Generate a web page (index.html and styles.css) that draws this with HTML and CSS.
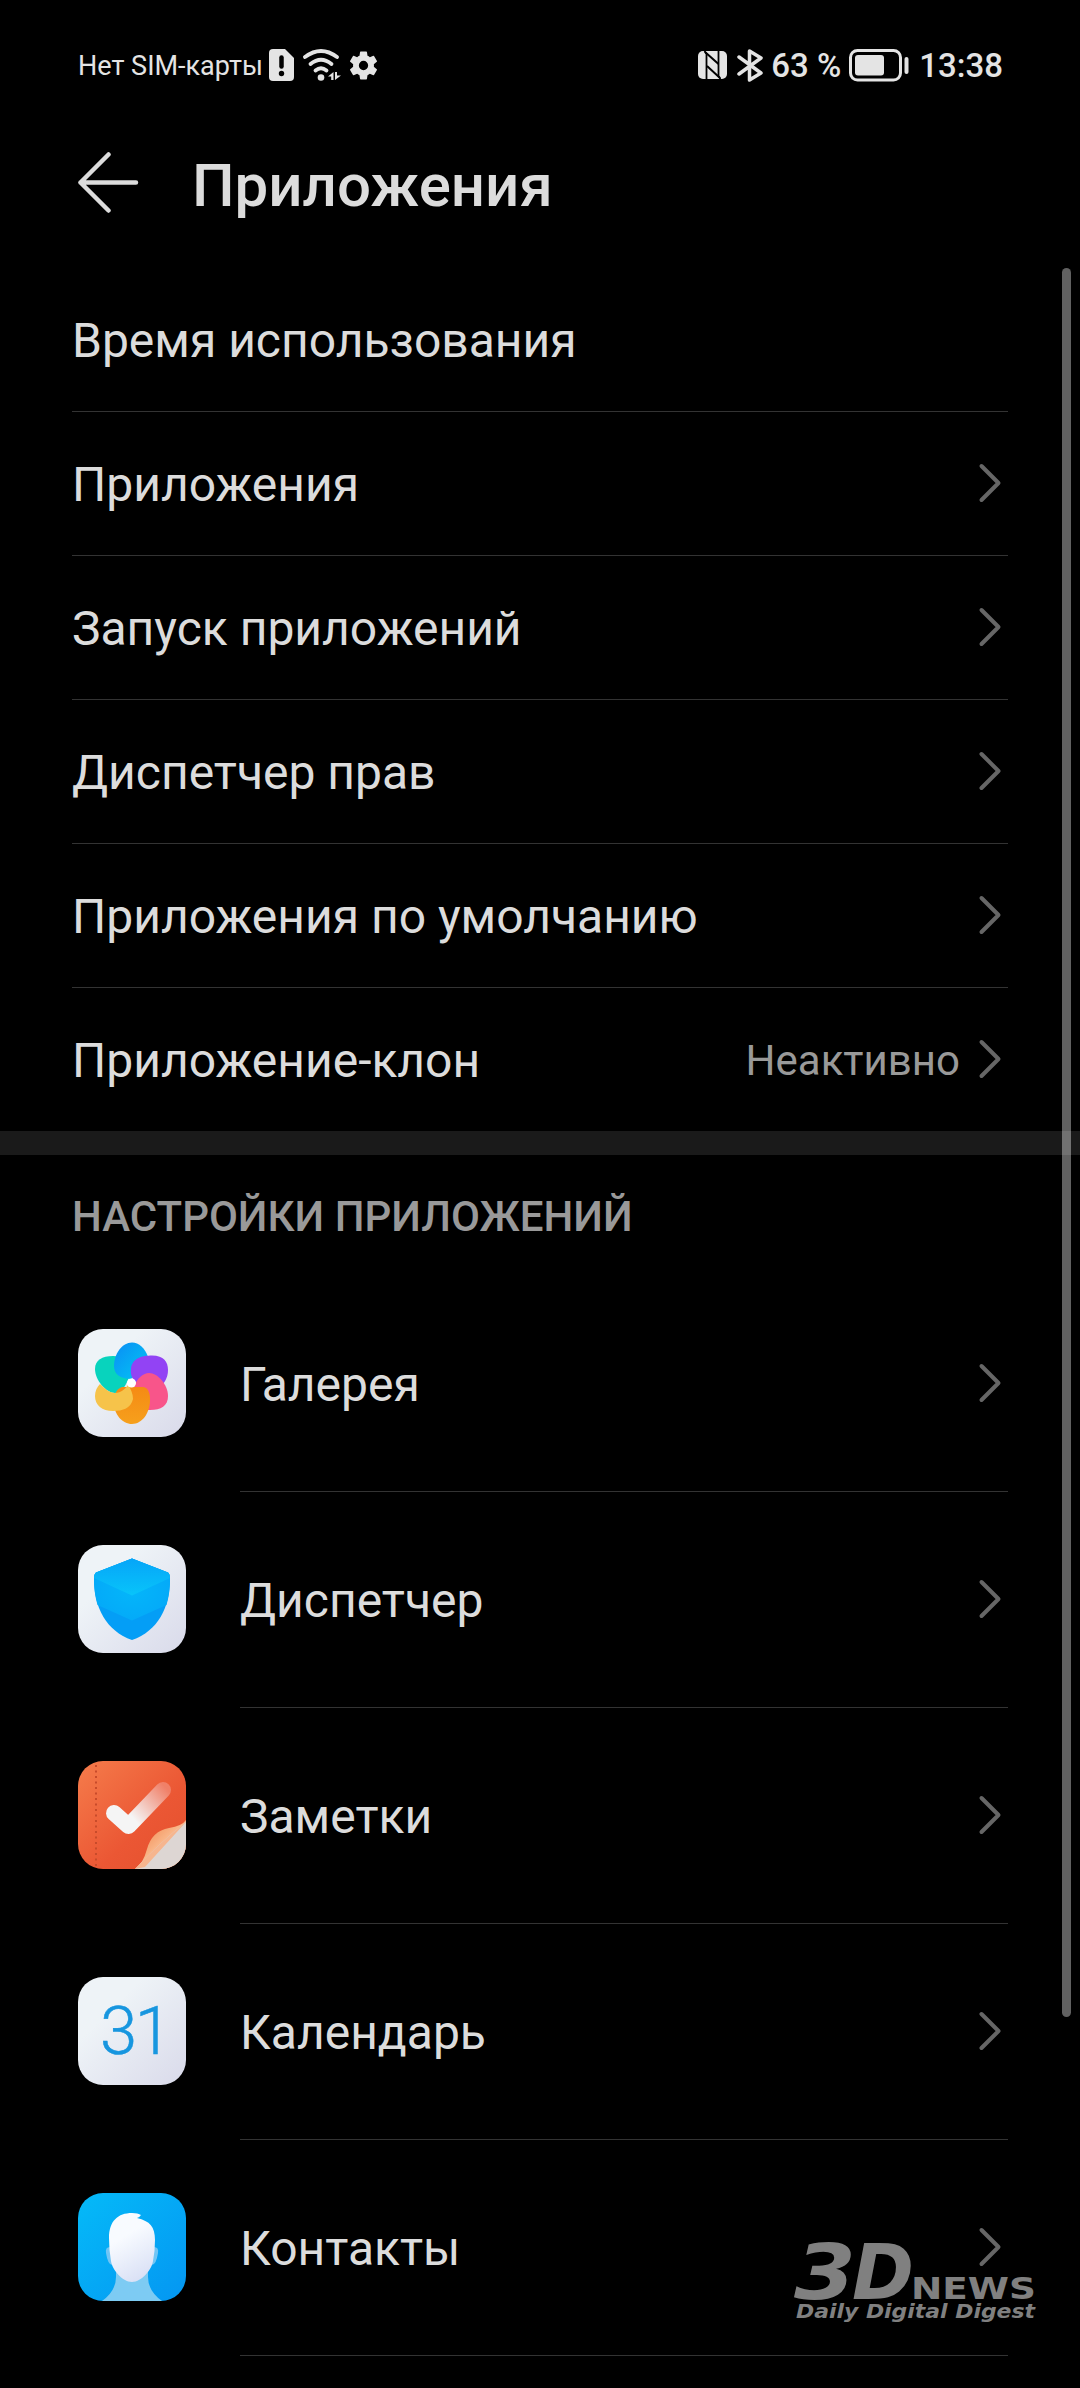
FILE: index.html
```html
<!DOCTYPE html>
<html lang="ru">
<head>
<meta charset="utf-8">
<title>Приложения</title>
<link rel="stylesheet" href="styles.css">
</head>
<body>
<svg width="0" height="0" class="defs" aria-hidden="true">
  <defs>
    <linearGradient id="paper" x1="0" y1="0" x2="1" y2="1"><stop offset=".3" stop-color="#eef3f7"/><stop offset="1" stop-color="#d9daea"/></linearGradient>
    <symbol id="chevron" viewBox="0 0 24 40"><path d="M3.500 3 L20.500 20 L3.500 37" fill="none" stroke="#666" stroke-width="4" stroke-linecap="round" stroke-linejoin="round"/></symbol>
  </defs>
</svg>
<div class="screen">
  <header class="status">
    <div class="status-left">
      <span class="carrier">Нет SIM-карты</span>
      <svg class="sim" width="25" height="32" viewBox="0 0 25 32"><path fill="#e4e4e4" d="M4 0h12l9 9v19a4 4 0 0 1-4 4H4a4 4 0 0 1-4-4V4a4 4 0 0 1 4-4z"/><path d="M12.500 8.500v9" stroke="#000" stroke-width="4.500" stroke-linecap="round"/><circle cx="12.500" cy="24.500" r="2.700"/></svg>
      <svg class="wifi" width="38" height="32" viewBox="0 0 38 32"><g fill="none" stroke="#e4e4e4" stroke-width="3.800" stroke-linecap="round"><path d="M2 8Q18 -4 34 8"/><path d="M7.500 15Q18 6.500 28.500 15"/><path d="M12.500 21.500Q18 17 23.500 21.500"/></g><circle cx="18" cy="28.500" r="3.300" fill="#e4e4e4"/><path fill="#e4e4e4" d="M30.500 23v8h-2.300v-3.500H25zM32 31v-8h2v3.500h4z"/></svg>
      <svg class="gear" width="29" height="29" viewBox="2 2 20 20"><path fill="#e4e4e4" d="M19.140 12.940c.040-.3.060-.61.060-.94s-.020-.64-.070-.94l2.030-1.580a.49.49 0 0 0 .12-.61l-1.920-3.320a.49.49 0 0 0-.59-.22l-2.390.96a7 7 0 0 0-1.620-.94L14.400 2.810a.48.48 0 0 0-.48-.41h-3.840a.47.47 0 0 0-.47.41l-.36 2.540c-.59.240-1.130.57-1.620.94l-2.390-.96a.47.47 0 0 0-.59.220L2.740 8.870a.47.470 0 0 0 .12.610l2.030 1.580c-.050.300-.090.630-.090.940s.020.640.070.940l-2.030 1.580a.49.490 0 0 0-.12.610l1.920 3.320c.12.220.370.290.590.220l2.390-.96c.500.380 1.030.700 1.620.940l.36 2.540c.050.240.240.410.480.410h3.840c.240 0 .440-.170.470-.410l.36-2.540a7 7 0 0 0 1.620-.94l2.390.96c.220.080.470 0 .590-.22l1.920-3.320a.47.470 0 0 0-.12-.61zM12 15.200a3.200 3.200 0 1 1 0-6.400 3.200 3.200 0 0 1 0 6.400z"/></svg>
    </div>
    <div class="status-right">
      <svg class="nfc" width="29" height="28" viewBox="0 0 29 28"><rect width="29" height="28" rx="5" fill="#e4e4e4"/><path d="M6.500 0L8.500 3V28M22.500 28L20.500 25V0" fill="none" stroke="#000" stroke-width="1.800"/><path d="M7 1L20.500 13M9 15L22 27" fill="none" stroke="#000" stroke-width="2"/></svg>
      <svg class="bt" width="26" height="33" viewBox="0 0 26 33"><path d="M2 8L24 24L12.500 31V2L24 9L2 25" fill="none" stroke="#e4e4e4" stroke-width="3.500" stroke-linejoin="round" stroke-linecap="round"/></svg>
      <span class="clock percent">63 %</span>
      <svg class="battery" width="60" height="33" viewBox="0 0 60 33"><rect x="1.500" y="1.500" width="50" height="29.500" rx="7" fill="none" stroke="#e4e4e4" stroke-width="3"/><rect x="6" y="6" width="29" height="20.500" rx="3" fill="#e4e4e4"/><rect x="55.500" y="8" width="4" height="17" rx="2" fill="#e4e4e4"/></svg>
      <span class="clock">13:38</span>
    </div>
  </header>

  <div class="titlebar">
    <svg width="62" height="62" viewBox="0 0 62 62"><path d="M30.500 2.500L2.500 30.500L30.500 58.500M2.500 30.500H58" fill="none" stroke="#dcdcdc" stroke-width="4.500" stroke-linecap="round" stroke-linejoin="round"/></svg>
    <h1>Приложения</h1>
  </div>

  <main>
    <div class="row"><span>Время использования</span></div>
    <div class="row"><span>Приложения</span><svg class="chev"><use href="#chevron"/></svg></div>
    <div class="row"><span>Запуск приложений</span><svg class="chev"><use href="#chevron"/></svg></div>
    <div class="row"><span>Диспетчер прав</span><svg class="chev"><use href="#chevron"/></svg></div>
    <div class="row"><span>Приложения по умолчанию</span><svg class="chev"><use href="#chevron"/></svg></div>
    <div class="row last"><span>Приложение-клон</span><span class="value">Неактивно</span><svg class="chev"><use href="#chevron"/></svg></div>
    <div class="band"></div>
    <h2>НАСТРОЙКИ ПРИЛОЖЕНИЙ</h2>

    <div class="app">
      <svg class="icon" viewBox="0 0 108 108">
        <defs>
          <linearGradient id="petal-blue" x1="0" y1="0" x2="1" y2="1"><stop stop-color="#0a8df5"/><stop offset=".7" stop-color="#05b6f4"/></linearGradient>
          <linearGradient id="petal-orange" x1="0" y1="0" x2="0" y2="1"><stop stop-color="#f58a14"/><stop offset="1" stop-color="#f6a01c"/></linearGradient>
        </defs>
        <rect width="108" height="108" rx="25" fill="url(#paper)"/>
        <path d="M17 40C17 31 24 27 35 27C47 27 52 34 52 42C51 53 44 64 37 64C28 64 17 51 17 40Z" fill="#08d3bd"/>
        <path d="M53 50C42 50 36 45 36 37C36 25 44 13.500 54 13.500C61 13.500 67 19 70 28L66 40Z" fill="url(#petal-blue)"/>
        <path d="M53 40C54 29 64 26.500 74 26.500C86 26.500 90 33 90 41C90 49 86 55 80 60C72 62 60 58 55 50C53 47 52.500 43 53 40Z" fill="#9243f4"/>
        <path d="M56 57C60 49 65 44 71 44C80 44 90 56 90 67C90 77 83 81 72 81C60 81 54 72 56 57Z" fill="#f8558a"/>
        <path d="M44 58H65C71 59 72 65 72 71C72 84 64 95 54 95C44 95 36 85 36 74C36 66 38 60 44 58Z" fill="url(#petal-orange)"/>
        <path d="M22 55C27 60 32 64 37 64C43 64 47 60 50 56C53 60 55 65 55 70C53 79 45 82 35 82C24 82 17 76 17 67C17 62 19 58 22 55Z" fill="#f6c34a"/>
        <circle cx="53.500" cy="54" r="4.500" fill="#fff"/>
      </svg>
      <div class="app-body"><span>Галерея</span><svg class="chev"><use href="#chevron"/></svg></div>
    </div>

    <div class="app">
      <svg class="icon" viewBox="0 0 108 108">
        <defs>
          <linearGradient id="shield" x1="0" y1="0" x2="0" y2="1"><stop stop-color="#06a5f8"/><stop offset="1" stop-color="#08c4fa"/></linearGradient>
          <radialGradient id="shield-mid" cx=".5" cy=".5" r=".6"><stop stop-color="#04b6fa"/><stop offset="1" stop-color="#04a8f8"/></radialGradient>
        </defs>
        <rect width="108" height="108" rx="25" fill="url(#paper)"/>
        <path d="M54 13.500L90 27.500Q92 29 92 34C92 62 80 86 54 95C28 86 16 62 16 34Q16 29 18 27.500Z" fill="#049ef6"/>
        <path d="M54 13.500L90 27.500Q92 29 92 34Q92 48 88.500 60L54 75.500L19.500 60Q16 48 16 34Q16 29 18 27.500Z" fill="url(#shield-mid)"/>
        <path d="M54 13.500L90 27.500Q92 29 92 33L54 50.500L16 33Q16 29 18 27.500Z" fill="url(#shield)"/>
      </svg>
      <div class="app-body"><span>Диспетчер</span><svg class="chev"><use href="#chevron"/></svg></div>
    </div>

    <div class="app">
      <svg class="icon" viewBox="0 0 108 108">
        <defs>
          <linearGradient id="note" x1="0" y1="0" x2="1" y2="1"><stop stop-color="#f57c4b"/><stop offset=".6" stop-color="#eb5734"/><stop offset="1" stop-color="#e4502e"/></linearGradient>
          <linearGradient id="tick" gradientUnits="userSpaceOnUse" x1="55" y1="57" x2="88" y2="27"><stop stop-color="#f5f5f5"/><stop offset="1" stop-color="#f08068"/></linearGradient>
          <linearGradient id="curl" x1="0" y1="0" x2="1" y2="1"><stop stop-color="#ef7638"/><stop offset=".5" stop-color="#f9b78a"/></linearGradient>
          <clipPath id="round"><rect width="108" height="108" rx="25"/></clipPath>
        </defs>
        <g clip-path="url(#round)">
          <rect width="108" height="108" fill="url(#note)"/>
          <path d="M18 4V108" stroke="#c84b2a" stroke-width="2" stroke-dasharray="2 3.500"/>
          <path d="M57 108Q65 103 69 88Q74 70 91 67Q104 65 108 59V108Z" fill="url(#curl)"/>
          <path d="M57 108Q81 82 108 61V108Z" fill="#ddd6d3"/>
          <path d="M57 108Q81 82 108 61Q87 84 67 106Z" fill="#f6b58e"/>
          <path d="M36 52L50.500 65L85 29" fill="none" stroke="url(#tick)" stroke-width="16" stroke-linecap="round" stroke-linejoin="round"/>
        </g>
      </svg>
      <div class="app-body"><span>Заметки</span><svg class="chev"><use href="#chevron"/></svg></div>
    </div>

    <div class="app">
      <svg class="icon" viewBox="0 0 108 108">
        <rect width="108" height="108" rx="25" fill="url(#paper)"/>
        <text class="day" x="22" y="77">31</text>
      </svg>
      <div class="app-body"><span>Календарь</span><svg class="chev"><use href="#chevron"/></svg></div>
    </div>

    <div class="app">
      <svg class="icon" viewBox="0 0 108 108">
        <defs>
          <linearGradient id="sky" x1="0" y1="0" x2="1" y2="1"><stop stop-color="#05baf8"/><stop offset="1" stop-color="#0496f2"/></linearGradient>
          <linearGradient id="face" x1=".3" y1="0" x2=".7" y2="1"><stop offset=".3" stop-color="#f8fbff"/><stop offset="1" stop-color="#d8dff5"/></linearGradient>
        </defs>
        <rect width="108" height="108" rx="25" fill="url(#sky)"/>
        <path d="M38 78H70V84Q70 98 84 108H24Q38 98 38 84Z" fill="#7dcbf3"/>
        <path d="M32 54Q27 54 28 60Q30 73 35 72ZM76 54Q81 54 80 60Q78 73 73 72Z" fill="#70c5f5"/>
        <path d="M54 89C44 89 34 76 33 68Q31 57 31 45C31 28 40 20 54 20Q60 20 63 22Q61 25 59 25C72 28 77 34 77 47Q77 58 75 68C74 76 64 89 54 89Z" fill="url(#face)"/>
      </svg>
      <div class="app-body"><span>Контакты</span><svg class="chev"><use href="#chevron"/></svg></div>
    </div>
  </main>

  <div class="scrollbar"></div>
  <svg class="watermark" viewBox="0 0 250 90">
    <g fill="#808080">
      <text class="wm-big" x="0" y="63" textLength="62" lengthAdjust="spacingAndGlyphs">3</text>
      <text class="wm-big" x="58" y="63" textLength="62" lengthAdjust="spacingAndGlyphs">D</text>
      <text class="wm-news" x="117" y="63" textLength="125" lengthAdjust="spacingAndGlyphs">NEWS</text>
      <text class="wm-tag" x="2" y="82" textLength="239" lengthAdjust="spacingAndGlyphs">Daily Digital Digest</text>
    </g>
  </svg>
</div>
</body>
</html>
```
FILE: styles.css
```css
* { box-sizing: border-box; }
body { margin: 0; background: #000; font-family: Roboto, "Noto Sans", sans-serif; color: #dcdcdc; }
svg { display: block; flex: none; }
.defs { position: absolute; }
.screen { position: relative; width: 1080px; height: 2388px; overflow: hidden; background: #000; }

.status { display: flex; justify-content: space-between; height: 130px; padding: 0 77px 0 78px; color: #e4e4e4; }
.status-left, .status-right { display: flex; align-items: center; height: 130px; white-space: nowrap; }
.carrier { font-size: 27px; width: 191px; padding-top: 2px; }
.wifi { margin-left: 9px; }
.gear { margin-left: 8px; }
.bt { margin-left: 10px; }
.clock { font-size: 33px; font-weight: 500; padding-top: 1px; }
.percent { margin: 0 8px 0 8px; }
.battery { margin-right: 10px; }

.titlebar { display: flex; align-items: center; height: 138px; padding: 0 78px 32px; gap: 52px; }
h1 { margin: 6px 0 0; font-size: 60px; font-weight: 500; line-height: 70px; }

.row { display: flex; align-items: center; height: 144px; margin: 0 72px; border-bottom: 1px solid #333; font-size: 48px; }
.row span, .app-body span { padding-top: 2px; }
.row.last { height: 143px; border-bottom: 0; }
.chev { width: 24px; height: 40px; margin: 0 6px 1px auto; }
.row .value { margin-left: auto; font-size: 42px; color: #999; }
.value + .chev { margin-left: 18px; }
.band { height: 24px; background: #1a1a1a; }
h2 { margin: 0; height: 121px; padding-left: 72px; font-size: 42px; font-weight: 500; line-height: 123px; color: #999; }

.app { display: flex; align-items: center; height: 216px; padding: 0 72px 0 78px; gap: 54px; }
.icon { width: 108px; height: 108px; margin-bottom: 2px; }
.app-body { display: flex; flex: 1; align-items: center; height: 216px; border-bottom: 1px solid #333; font-size: 48px; }
.day { font-family: Roboto, sans-serif; font-size: 67px; font-weight: 300; letter-spacing: -2.5px; fill: #1796df; stroke: #1796df; stroke-width: .5px; }

.scrollbar { position: absolute; top: 268px; left: 1062px; width: 9px; height: 1749px; border-radius: 5px; background: rgba(255, 255, 255, .38); }
.watermark { position: absolute; left: 794px; top: 2236px; width: 250px; height: 90px; overflow: visible; }
.wm-big { font: italic 700 76px "DejaVu Sans", sans-serif; }
.wm-news { font: 700 31px "DejaVu Sans", sans-serif; }
.wm-tag { font: italic 700 20px "DejaVu Sans", sans-serif; }
```
